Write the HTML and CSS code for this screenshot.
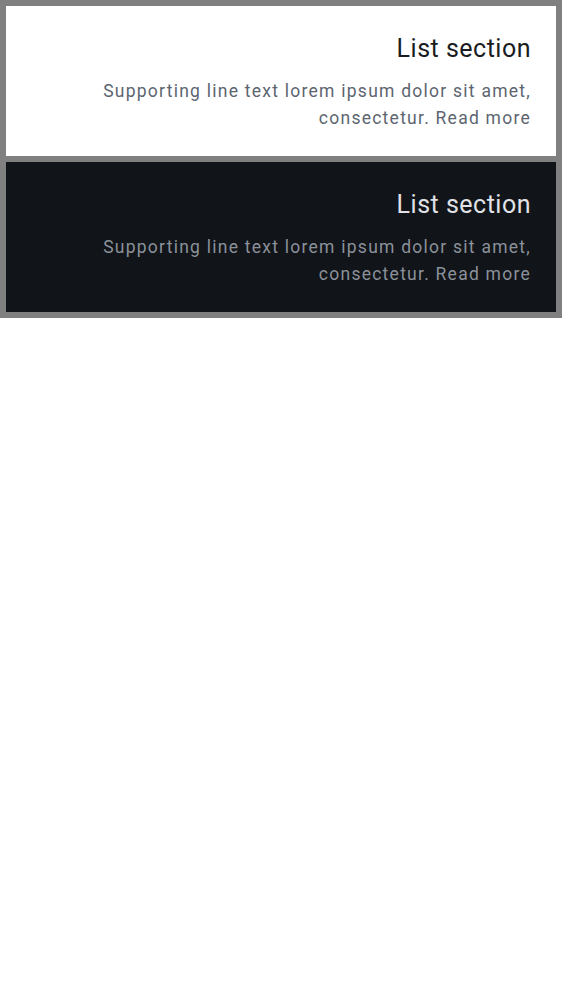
FILE: index.html
```html
<!DOCTYPE html>
<html>
<head>
<meta charset="utf-8">
<link rel="stylesheet" href="styles.css">
</head>
<body>
<div class="frame">
  <section class="card card-light">
    <h2 class="title">List section</h2>
    <p class="support">Supporting line text lorem ipsum dolor sit amet, consectetur. Read more</p>
  </section>
  <section class="card card-dark">
    <h2 class="title">List section</h2>
    <p class="support">Supporting line text lorem ipsum dolor sit amet, consectetur. Read more</p>
  </section>
</div>
</body>
</html>
```
FILE: styles.css
```css
html, body {
  margin: 0;
  padding: 0;
  background: #ffffff;
}
body {
  font-family: Roboto, "Noto Sans", sans-serif;
}
.frame {
  background: #808080;
  padding: 6px;
  display: flex;
  flex-direction: column;
  gap: 6px;
}
.card {
  height: 150px;
  box-sizing: border-box;
  padding: 29px 25px 0 24px;
  display: flex;
  flex-direction: column;
  align-items: flex-end;
  text-align: right;
}
.card-light { background: #ffffff; }
.card-dark { background: #111418; }
.title {
  margin: 0;
  font-size: 25px;
  line-height: 28px;
  font-weight: 400;
  letter-spacing: 0.5px;
}
.support {
  margin: 15px 0 0;
  font-size: 17.5px;
  line-height: 26.5px;
  letter-spacing: 1.25px;
  max-width: 470px;
}
.card-light .title { color: #191c20; }
.card-light .support { color: #5c6570; }
.card-dark .title { color: #e1e2e8; }
.card-dark .support { color: #8b919a; }
```
